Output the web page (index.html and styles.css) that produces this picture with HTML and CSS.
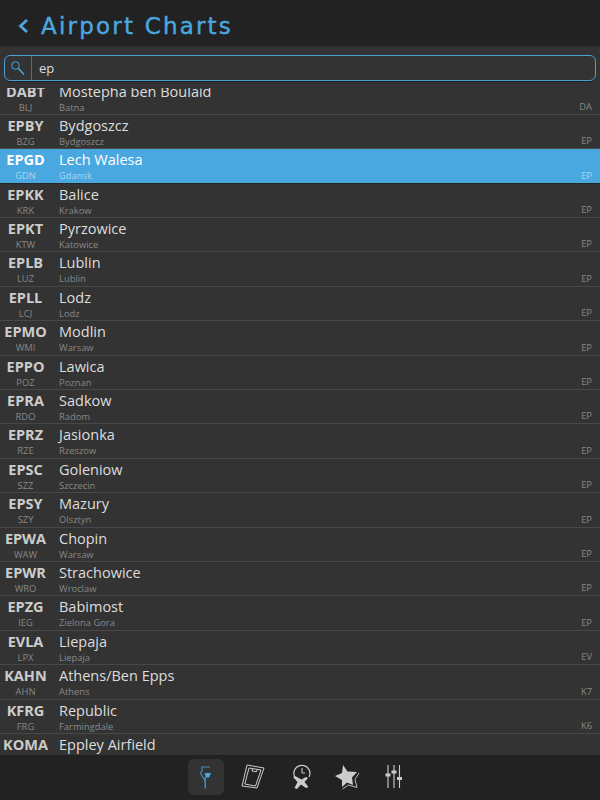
FILE: index.html
```html
<!DOCTYPE html>
<html lang="en">
<head>
    <meta charset="UTF-8">
    <title>Airport Charts</title>
    <link rel="stylesheet" href="styles.css">
</head>
<body>
    <div class="app">
        <header class="header">
            <svg class="back" width="12" height="16" viewBox="0 0 12 16"><path d="M10 2 L3.500 8 L10 14" fill="none" stroke="#4aa8e0" stroke-width="2.800"/></svg>
            <h1 class="title">Airport Charts</h1>
        </header>

        <div class="search-bar">
            <div class="search">
                <div class="search-icon">
                    <svg width="16" height="17" viewBox="0 0 16 17"><circle cx="5.500" cy="5.500" r="3.800" fill="none" stroke="#4aa8e0" stroke-width="1"/><path d="M8.500 8.500 L14 14.500" stroke="#4aa8e0" stroke-width="1.600"/></svg>
                </div>
                <div class="search-text">ep</div>
            </div>
        </div>

        <div class="list">
            <div class="rows">
                <div class="row"><div class="code"><b>DABT</b><span>BLJ</span></div><div class="info"><b>Mostepha ben Boulaid</b><span>Batna</span></div><div class="country">DA</div></div>
                <div class="row"><div class="code"><b>EPBY</b><span>BZG</span></div><div class="info"><b>Bydgoszcz</b><span>Bydgoszcz</span></div><div class="country">EP</div></div>
                <div class="row selected"><div class="code"><b>EPGD</b><span>GDN</span></div><div class="info"><b>Lech Walesa</b><span>Gdansk</span></div><div class="country">EP</div></div>
                <div class="row"><div class="code"><b>EPKK</b><span>KRK</span></div><div class="info"><b>Balice</b><span>Krakow</span></div><div class="country">EP</div></div>
                <div class="row"><div class="code"><b>EPKT</b><span>KTW</span></div><div class="info"><b>Pyrzowice</b><span>Katowice</span></div><div class="country">EP</div></div>
                <div class="row"><div class="code"><b>EPLB</b><span>LUZ</span></div><div class="info"><b>Lublin</b><span>Lublin</span></div><div class="country">EP</div></div>
                <div class="row"><div class="code"><b>EPLL</b><span>LCJ</span></div><div class="info"><b>Lodz</b><span>Lodz</span></div><div class="country">EP</div></div>
                <div class="row"><div class="code"><b>EPMO</b><span>WMI</span></div><div class="info"><b>Modlin</b><span>Warsaw</span></div><div class="country">EP</div></div>
                <div class="row"><div class="code"><b>EPPO</b><span>POZ</span></div><div class="info"><b>Lawica</b><span>Poznan</span></div><div class="country">EP</div></div>
                <div class="row"><div class="code"><b>EPRA</b><span>RDO</span></div><div class="info"><b>Sadkow</b><span>Radom</span></div><div class="country">EP</div></div>
                <div class="row"><div class="code"><b>EPRZ</b><span>RZE</span></div><div class="info"><b>Jasionka</b><span>Rzeszow</span></div><div class="country">EP</div></div>
                <div class="row"><div class="code"><b>EPSC</b><span>SZZ</span></div><div class="info"><b>Goleniow</b><span>Szczecin</span></div><div class="country">EP</div></div>
                <div class="row"><div class="code"><b>EPSY</b><span>SZY</span></div><div class="info"><b>Mazury</b><span>Olsztyn</span></div><div class="country">EP</div></div>
                <div class="row"><div class="code"><b>EPWA</b><span>WAW</span></div><div class="info"><b>Chopin</b><span>Warsaw</span></div><div class="country">EP</div></div>
                <div class="row"><div class="code"><b>EPWR</b><span>WRO</span></div><div class="info"><b>Strachowice</b><span>Wroclaw</span></div><div class="country">EP</div></div>
                <div class="row"><div class="code"><b>EPZG</b><span>IEG</span></div><div class="info"><b>Babimost</b><span>Zielona Gora</span></div><div class="country">EP</div></div>
                <div class="row"><div class="code"><b>EVLA</b><span>LPX</span></div><div class="info"><b>Liepaja</b><span>Liepaja</span></div><div class="country">EV</div></div>
                <div class="row"><div class="code"><b>KAHN</b><span>AHN</span></div><div class="info"><b>Athens/Ben Epps</b><span>Athens</span></div><div class="country">K7</div></div>
                <div class="row"><div class="code"><b>KFRG</b><span>FRG</span></div><div class="info"><b>Republic</b><span>Farmingdale</span></div><div class="country">K6</div></div>
                <div class="row"><div class="code"><b>KOMA</b></div><div class="info"><b>Eppley Airfield</b></div></div>
            </div>
        </div>

        <nav class="tabbar">
            <div class="tab active">
                <svg width="36" height="36" viewBox="0 0 36 36" fill="none" stroke="#3f93c8"><path d="M22 8 H14 V12 L12.500 14 L17 22" stroke-width="1.100"/><path d="M16.500 14 H23 L21 18.500 H18 Z" fill="#4aa8e0" stroke="none"/><path d="M17.200 18 V29.500" stroke-width="1.400"/></svg>
            </div>
            <div class="tab">
                <svg width="36" height="36" viewBox="0 0 36 36" fill="none" stroke="#ccc" stroke-width="1"><path d="M12 6 L29 9 L22 29 L7 27 Z"/><path d="M14 9 L26 11 L20.500 27 L9.800 25 Z"/><path d="M17.500 10 L17 12 L21.500 12.700 L22 10.700"/></svg>
            </div>
            <div class="tab">
                <svg width="36" height="36" viewBox="0 0 36 36" fill="none" stroke="#ccc"><path d="M12.800 18 A8 8 0 1 1 27 18" stroke-width="1.200"/><path d="M20 9 V14 H23" stroke-width="1"/><path d="M11 18 L13 17 L19.500 20.500 L24 18 L26 19 L22.500 23 L26.500 28 L24 29 L19 25.500 L15 30 L12.500 29 L15.500 23 Z" fill="#ccc" stroke="none"/></svg>
            </div>
            <div class="tab">
                <svg width="36" height="36" viewBox="0 0 36 36" fill="none"><path d="M14 6 L18.500 12.500 L28 13 L23 18.500 L24 26 L18 23.500 L13 28 L13 21 L6 17 L13 14 Z" fill="#ccc"/><path d="M30 14 L26 20.500 L28 28.500 L19.500 26 L13.500 30" stroke="#ccc" stroke-width="0.900"/></svg>
            </div>
            <div class="tab">
                <svg width="36" height="36" viewBox="0 0 36 36" fill="none" stroke="#ccc"><path d="M12 6 V29 M18 6 V29 M23.500 6 V29" stroke-width="1.100"/><path d="M9.500 14.500 H14.500 V17.500 H9.500 Z M15.500 11.500 H20.500 V14.500 H15.500 Z M21 18 H26 V21 H21 Z" fill="#ccc" stroke="none"/></svg>
            </div>
        </nav>
    </div>
</body>
</html>
```

FILE: styles.css
```css
* {
    box-sizing: border-box;
}

html, body {
    margin: 0;
    height: 100%;
}

body {
    background-color: #333;
    font-family: "Open Sans", "Noto Sans", sans-serif;
    color: #ddd;
}

.app {
    display: flex;
    flex-direction: column;
    height: 800px;
    overflow: hidden;
}

.header {
    display: flex;
    align-items: center;
    gap: 12px;
    flex: none;
    height: 46px;
    padding: 5px 0 0 17px;
    background-color: #222;
}

.title {
    margin: 0;
    font-family: "DejaVu Sans", sans-serif;
    font-size: 23px;
    font-weight: normal;
    letter-spacing: 2.2px;
    color: #4aa8e0;
    -webkit-text-stroke: 0.4px #4aa8e0;
}

.search-bar {
    flex: none;
    height: 42px;
    padding: 8px 4px 8px 4px;
    background-color: #333;
    border-top: 1px solid #2b2b2b;
    z-index: 1;
}

.search {
    display: flex;
    height: 26px;
    border: 1px solid #4a9fd4;
    border-radius: 6px;
    box-shadow: 0 1px 1px #1f1f1f;
}

.search-icon {
    display: flex;
    align-items: center;
    justify-content: center;
    width: 27px;
    border-right: 1px solid #8a5a4a;
}

.search-text {
    padding-left: 7px;
    font-size: 13px;
    line-height: 24px;
    color: #ddd;
}

.list {
    flex: 1;
    min-height: 0;
    overflow: hidden;
}

.rows {
    margin-top: -7.5px;
}

.row {
    display: flex;
    align-items: stretch;
    height: 34.4px;
    padding-right: 8px;
    border-bottom: 1px solid #484848;
}

.row.selected {
    background-color: #4aa8e0;
    color: #fff;
    border-bottom-color: #262626;
}

.code {
    display: flex;
    flex-direction: column;
    align-items: center;
    flex: none;
    width: 51px;
}

.info {
    display: flex;
    flex-direction: column;
    flex: 1;
    padding-left: 8px;
}

.code b {
    font-size: 14.5px;
    line-height: 22px;
    height: 21px;
    font-weight: bold;
    color: #ccc;
}

.info b {
    font-size: 14.5px;
    line-height: 22px;
    height: 21px;
    font-weight: normal;
}

.code span, .info span, .country {
    font-size: 9.4px;
    line-height: 12px;
    color: #888;
}

.country {
    align-self: flex-end;
    padding-bottom: 1px;
}

.selected .code b {
    color: #fff;
}

.selected .code span, .selected .info span, .selected .country {
    color: #a5d6f2;
}

.tabbar {
    display: flex;
    justify-content: center;
    gap: 11px;
    flex: none;
    height: 45px;
    padding-top: 4px;
    background-color: #222;
}

.tab {
    width: 36px;
    height: 36px;
    border-radius: 6px;
}

.tab.active {
    background-color: #333;
}

.tab svg {
    display: block;
}
```
